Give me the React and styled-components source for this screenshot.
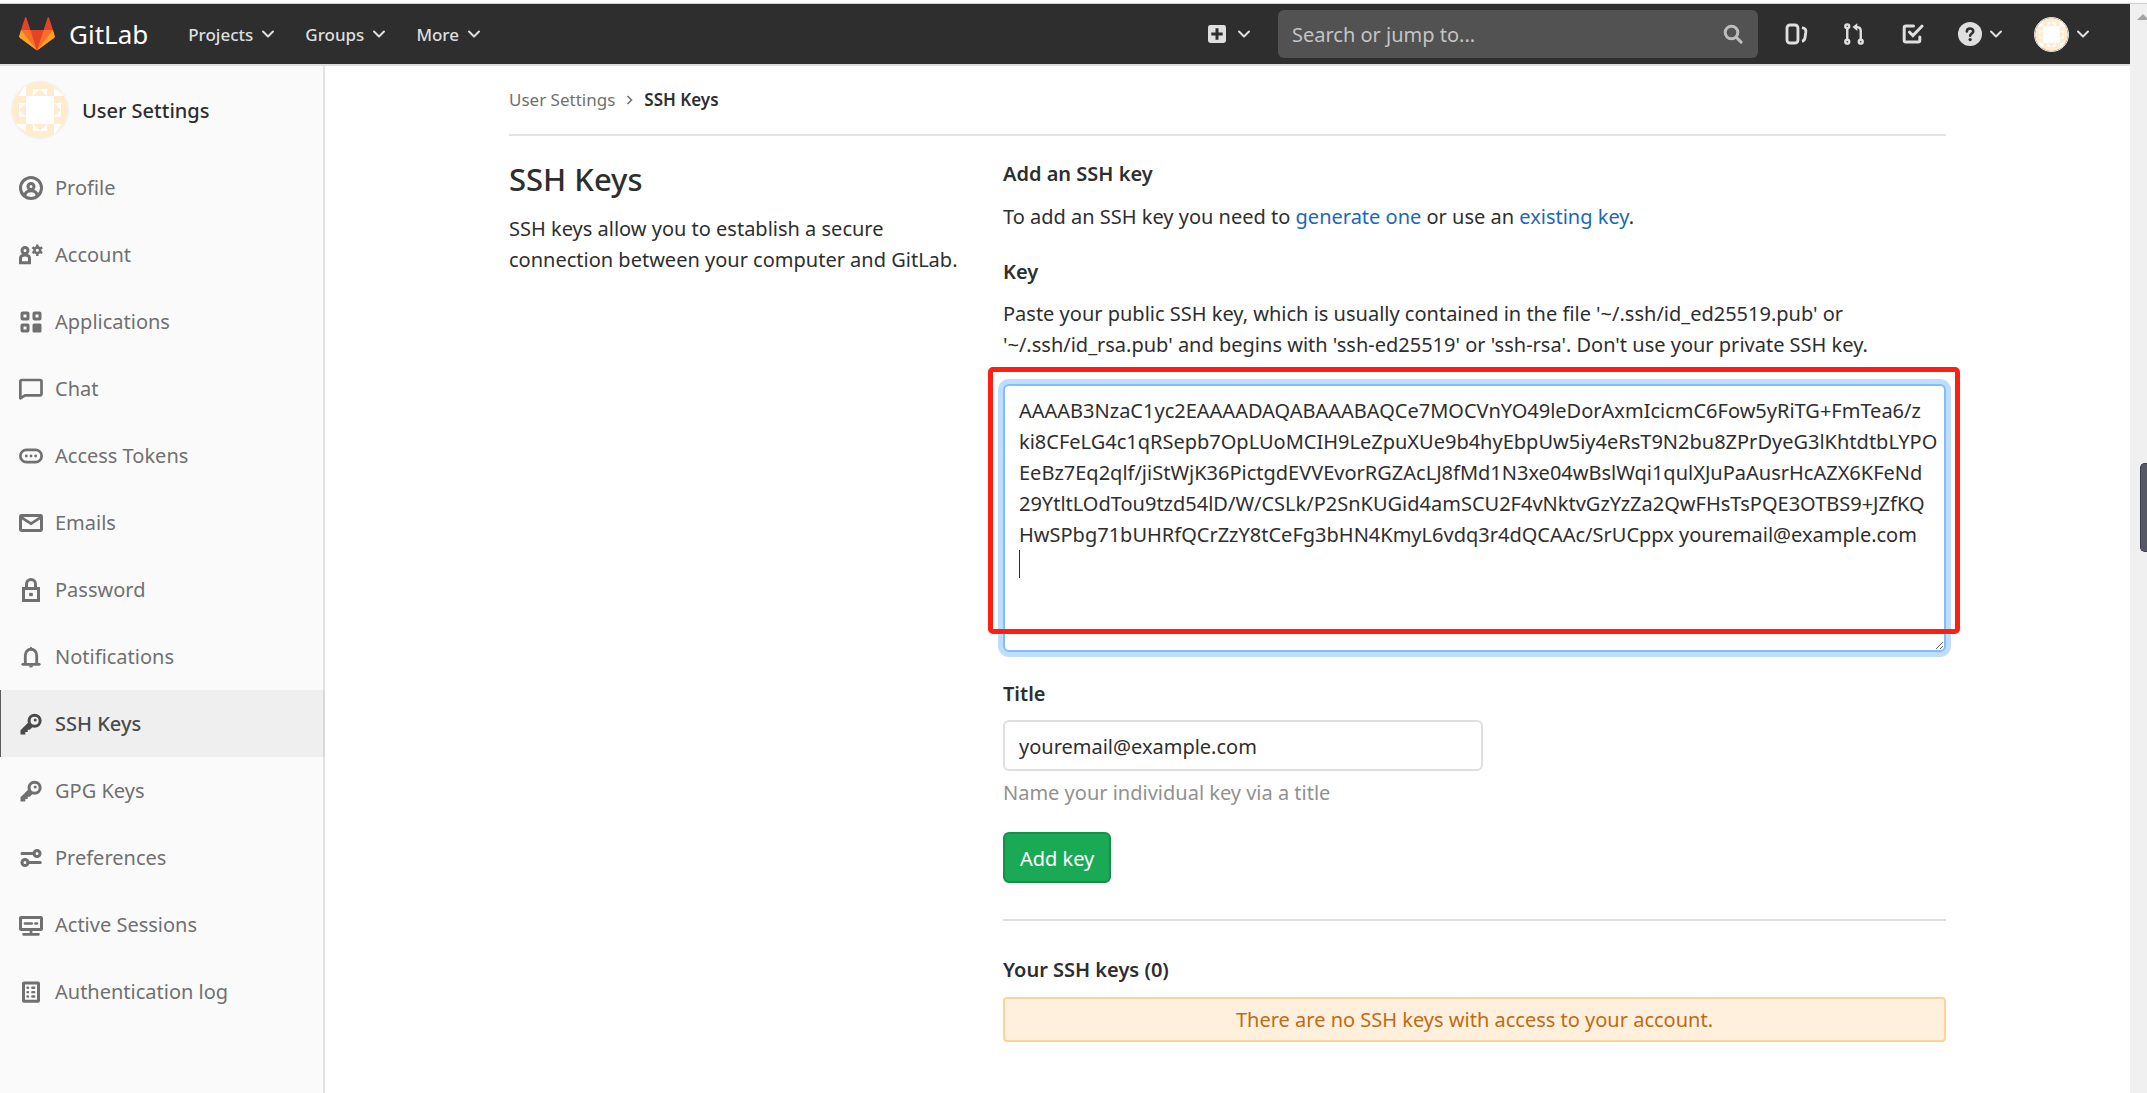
import React from "react";
import styled, { createGlobalStyle } from "styled-components";

const GlobalStyle = createGlobalStyle`
  *, *::before, *::after { box-sizing: border-box; }
  body {
    margin: 0;
    background: #fff;
    color: #2e2e2e;
    font-family: "Noto Sans", "Open Sans", sans-serif;
    font-size: 20px;
    line-height: 31px;
  }
  h1, h2, p, ul, ol { margin: 0; padding: 0; }
  ul, ol { list-style: none; }
  a { text-decoration: none; }
  input, textarea, button { font: inherit; color: inherit; }
`;

const Window = styled.div`
  display: flex;
  flex-direction: column;
  min-height: 100vh;
`;

const WindowEdge = styled.div`
  height: 4px;
  background: #fbfbfb;
  border-bottom: 1px solid #cfcfcf;
`;

const Viewport = styled.div`
  display: flex;
  flex: 1;
  position: relative;
`;

const Page = styled.div`
  display: flex;
  flex-direction: column;
  flex: 1;
  min-width: 0;
`;

const ScrollTrack = styled.div`
  flex: none;
  width: 17px;
  padding-top: 10px;
  overflow: hidden;
  background: #f0f0f0;
`;

const ScrollArrow = styled.div`
  width: 12px;
  height: 6px;
  margin-left: 7px;
  background: #a3a3a3;
  clip-path: polygon(50% 0, 100% 100%, 0 100%);
`;

const DockTab = styled.div`
  position: absolute;
  top: 459px;
  right: 0;
  width: 7px;
  height: 89px;
  border: 1px solid #3c3e4a;
  border-right: 0;
  border-radius: 5px 0 0 5px;
  background: #565866;
`;

const Navbar = styled.header`
  display: flex;
  align-items: center;
  justify-content: space-between;
  height: 62px;
  padding: 0 40px 0 19px;
  background: #2e2e2e;
  border-bottom: 2px solid #dfdfdf;
`;

const Brand = styled.a`
  display: flex;
  align-items: center;
  gap: 14px;
  margin-right: 40px;
  color: #fff;
  font-size: 26px;
`;

const NavGroup = styled.nav`
  display: flex;
  align-items: center;
`;

const NavMenu = styled.button`
  display: flex;
  align-items: center;
  gap: ${(p) => p.$gap || 8}px;
  margin: 0 ${(p) => p.$after || 0}px 0 0;
  padding: 0;
  border: 0;
  background: none;
  color: #dfdfdf;
  font-size: 17px;
  font-weight: 500;
`;

const NavLink = styled.a`
  display: flex;
  margin-right: 34px;
  color: #dfdfdf;
`;

const SearchBox = styled.label`
  display: flex;
  align-items: center;
  width: 480px;
  height: 48px;
  margin-right: 26px;
  padding: 0 13px 0 14px;
  border-radius: 6px;
  background: #525252;
  color: #bdbdbd;
`;

const SearchInput = styled.input`
  flex: 1;
  min-width: 0;
  padding: 0;
  border: 0;
  outline: 0;
  background: none;
  &::placeholder { color: #c4c4c4; opacity: 1; }
`;

const Body = styled.div`
  display: flex;
  flex: 1;
`;

const Sidebar = styled.aside`
  flex: none;
  width: 325px;
  background: #fafafa;
  box-shadow: inset -2px 0 0 #e3e3e3;
`;

const SidebarHead = styled.a`
  display: flex;
  align-items: center;
  gap: 13px;
  height: 88px;
  padding-left: 11px;
  color: #2e2e2e;
  font-weight: 500;
`;

const SideLink = styled.a`
  display: flex;
  align-items: center;
  gap: 12px;
  height: 67px;
  padding-left: 18px;
  border-left: 1px solid ${(p) => (p.$active ? "#5c5c5c" : "transparent")};
  background: ${(p) => (p.$active ? "rgba(0, 0, 0, 0.045)" : "none")};
  color: ${(p) => (p.$active ? "#4a4a4a" : "#707070")};
  font-weight: ${(p) => (p.$active ? 500 : 400)};
`;

const Main = styled.main`
  flex: 1;
  min-width: 0;
`;

const Container = styled.div`
  max-width: 1485px;
  margin: 0 auto;
  padding: 0 24px;
`;

const Breadcrumb = styled.ol`
  display: flex;
  align-items: center;
  gap: 11px;
  height: 70px;
  padding-bottom: 1px;
  border-bottom: 2px solid #e3e3e3;
  font-size: 17px;
`;

const Crumb = styled.a`
  color: ${(p) => (p.$current ? "#2e2e2e" : "#707070")};
  font-weight: ${(p) => (p.$current ? 600 : 400)};
`;

const CrumbItem = styled.li`
  display: flex;
  align-items: center;
  gap: 11px;
  color: #707070;
`;

const Columns = styled.div`
  display: grid;
  grid-template-columns: calc((100% - 90px) / 3) 1fr;
  column-gap: 45px;
  padding-top: 22px;
`;

const PageTitle = styled.h1`
  margin-bottom: 13px;
  font-size: 31px;
  line-height: 42px;
  font-weight: 500;
`;

const SectionTitle = styled.h2`
  margin-bottom: 12px;
  font-size: 20px;
  line-height: 31px;
  font-weight: 600;
`;

const Text = styled.p`
  margin-bottom: ${(p) => p.$after || 0}px;
`;

const TextLink = styled.a`
  color: #1b69b6;
`;

const FieldLabel = styled.label`
  display: block;
  margin-bottom: 11px;
  font-weight: 600;
`;

const KeyField = styled.div`
  position: relative;
  margin-bottom: 26px;
`;

const KeyInput = styled.textarea`
  display: block;
  width: 100%;
  height: 268px;
  padding: 9px 14px;
  border: 2px solid #80bdff;
  border-radius: 6px;
  outline: 0;
  box-shadow: 0 0 0 5px #bfdeff;
  background: #fff;
  line-height: 31px;
  white-space: pre;
  overflow: hidden;
  resize: vertical;
`;

const Caret = styled.span`
  position: absolute;
  top: 166px;
  left: 16px;
  width: 1px;
  height: 28px;
  background: #2e2e2e;
`;

const Highlight = styled.div`
  position: absolute;
  inset: -17px -14px 18px -15px;
  border: 5px solid #ff1f12;
  border-radius: 5px;
  pointer-events: none;
`;

const TitleInput = styled.input`
  display: block;
  width: 480px;
  max-width: 100%;
  height: 51px;
  padding: 2px 14px 0;
  border: 2px solid #dfdfdf;
  border-radius: 6px;
  background: #fff;
`;

const Hint = styled.p`
  margin: 6px 0 24px;
  color: #919191;
`;

const SubmitButton = styled.button`
  display: block;
  height: 51px;
  padding: 2px 15px 0;
  border: 2px solid #168f48;
  border-radius: 6px;
  background: #1aaa55;
  color: #fff;
`;

const Divider = styled.hr`
  height: 2px;
  margin: 36px 0 33px;
  border: 0;
  background: #dfdfdf;
`;

const EmptyNotice = styled.p`
  padding: 5px 14px;
  border: 2px solid #fdd496;
  border-radius: 4px;
  background: #fff0de;
  color: #c26a10;
  text-align: center;
`;

const IconSvg = styled.svg`
  display: block;
  flex: none;
  fill: none;
  stroke: currentColor;
  stroke-width: ${(p) => p.$stroke || 2};
`;

const Solid = { fill: "currentColor", stroke: "none" };

const keyShape = (
  <>
    <circle cx="10.4" cy="5.8" r="3.7" />
    <circle cx="10.8" cy="5.4" r="1" {...Solid} />
    <path d="M6 7.2 1 12.2V15h3.2v-1.6h1.6v-1.6h1.4L9.2 9.8z" {...Solid} />
  </>
);

const shapes = {
  profile: (
    <>
      <circle cx="8" cy="8" r="7" />
      <circle cx="8" cy="7" r="2" />
      <path d="M3.8 13.4C4 10.8 5.6 9.8 8 9.8s4 1 4.2 3.6" />
    </>
  ),
  account: (
    <>
      <circle cx="4" cy="5" r="2" />
      <path d="M1 13.2V10.5C1 8.8 2.2 8 4 8s3 .8 3 2.5v2.7z" />
      <circle cx="12.2" cy="4.8" r="1.9" strokeWidth="1.7" />
      <path d="M12.2 1v1.6M12.2 7v1.6M8.9 2.9l1.4.8M14.1 5.9l1.4.8M8.9 6.7l1.4-.8M14.1 3.7l1.4-.8" strokeWidth="1.6" />
    </>
  ),
  applications: (
    <>
      <rect x="2" y="2" width="4" height="4" rx=".4" />
      <rect x="10" y="2" width="4" height="4" rx=".4" />
      <rect x="2" y="10" width="4" height="4" rx=".4" />
      <rect x="9" y="9" width="6" height="6" rx="1" {...Solid} />
    </>
  ),
  chat: <path d="M.9 14.2V3c0-.6.4-1 1-1H14c.6 0 1 .4 1 1v8.200c0 .6-.4 1-1 1H4z" strokeWidth="1.8" strokeLinejoin="round" />,
  token: (
    <>
      <rect x=".9" y="3.900" width="14.200" height="8.200" rx="4.100" strokeWidth="1.8" />
      <circle cx="4.900" cy="8" r=".95" {...Solid} />
      <circle cx="8" cy="8" r=".95" {...Solid} />
      <circle cx="11.100" cy="8" r=".95" {...Solid} />
    </>
  ),
  mail: (
    <>
      <rect x="1" y="3" width="14" height="10" rx=".6" />
      <path d="m1.500 4.200 6.500 4.200 6.500-4.200" strokeWidth="1.8" />
    </>
  ),
  lock: (
    <>
      <rect x="3" y="7" width="10" height="8" />
      <path d="M5 6.500V4a3 3 0 0 1 6 0v2.500" />
      <rect x="6.800" y="9.900" width="2.400" height="2.200" {...Solid} />
    </>
  ),
  bell: (
    <>
      <path d="M4.200 12.500V7a3.800 4.200 0 0 1 7.600 0v5.500" strokeWidth="1.9" />
      <path d="M2.500 12.900h11" strokeLinecap="round" strokeWidth="1.8" />
      <path d="M6.600 2.600 8 1l1.400 1.600zM6.500 13.600h3L8.800 15H7.200z" {...Solid} />
    </>
  ),
  key: keyShape,
  preferences: (
    <>
      <path d="M2 5h8M6 11h8.200" strokeLinecap="round" />
      <circle cx="12" cy="5" r="2" />
      <circle cx="4" cy="11" r="2" />
    </>
  ),
  monitor: (
    <>
      <rect x="1" y="3" width="14" height="8" rx=".4" />
      <path d="M4 7h4.500M11 7h1" strokeLinecap="round" strokeWidth="1.8" />
      <path d="M8 11.500V14M3 14.200h10" strokeLinecap="round" strokeWidth="1.8" />
    </>
  ),
  log: (
    <>
      <rect x="3" y="2" width="10" height="12.200" rx=".3" />
      <path d="M5.700 5.200h.3M8.900 5.200h1.200M5.700 8.100h.3M8.900 8.100h1.200M5.700 11h.3M8.900 11h1.200" strokeLinecap="round" strokeWidth="1.6" />
    </>
  ),
  plus: (
    <>
      <rect x="2" y="2" width="12" height="12" rx="1.600" {...Solid} />
      <path d="M8 4.200v7.600M4.200 8h7.600" stroke="#2e2e2e" />
    </>
  ),
  search: (
    <>
      <circle cx="7" cy="7" r="4.200" />
      <path d="m10.300 10.300 3.100 3.100" strokeLinecap="round" />
    </>
  ),
  issues: (
    <>
      <rect x="2" y="2" width="7.300" height="12" rx="2" strokeWidth="1.900" />
      <path d="M12 3.800c2.700.6 2.700 1.400 2.500 3.200l-.5 3.500c-.2 1.500-.6 2-2 2.400" strokeWidth="1.900" />
    </>
  ),
  merge: (
    <>
      <circle cx="3.500" cy="2.900" r="1.300" />
      <circle cx="3.500" cy="13.100" r="1.300" />
      <circle cx="12.500" cy="13.100" r="1.300" />
      <path d="M3.500 4.500v7M12.500 11.500V6c0-1.800-.8-2.600-2.600-2.600H9" />
      <path d="M10.200.8v5.200L7 3.400z" {...Solid} />
    </>
  ),
  todo: (
    <>
      <path d="M9 2.600H4c-.8 0-1.200.4-1.200 1.200v8.400c0 .8.4 1.200 1.200 1.200h8c.8 0 1.200-.4 1.200-1.200V10" strokeLinecap="round" />
      <path d="m6.400 6.800 2.200 2.300 6-6.300" strokeLinecap="round" />
    </>
  ),
  help: (
    <>
      <circle cx="8" cy="8" r="8" {...Solid} />
      <path d="M5.900 6.300c0-1.300.9-2 2.100-2s2.200.8 2.200 1.900c0 1.400-2.100 1.500-2.100 3" stroke="#2e2e2e" strokeWidth="1.700" strokeLinecap="round" />
      <circle cx="8.100" cy="11.700" r="1.100" fill="#2e2e2e" stroke="none" />
    </>
  ),
};

function Icon({ name, size = 24, stroke }) {
  return (
    <IconSvg width={size} height={size} viewBox="0 0 16 16" $stroke={stroke} aria-hidden="true">
      {shapes[name]}
    </IconSvg>
  );
}

function ChevronDown() {
  return (
    <IconSvg width="14" height="10" viewBox="0 0 14 10" aria-hidden="true">
      <path d="m2 2.500 5 5 5-5" strokeLinecap="round" strokeLinejoin="round" />
    </IconSvg>
  );
}

function ChevronRight() {
  return (
    <IconSvg width="7" height="10" viewBox="0 0 7 10" $stroke={1.6} aria-hidden="true">
      <path d="m1.500 1 4 4-4 4" />
    </IconSvg>
  );
}

function Logo() {
  return (
    <svg width="36" height="36" viewBox="0 0 36 36" aria-hidden="true">
      <path fill="#e24329" d="M2 14l9.380 9v-9l-4-12.280c-.205-.632-1.176-.632-1.380 0z" />
      <path fill="#e24329" d="M34 14l-9.380 9v-9l4-12.280c.205-.632 1.176-.632 1.380 0z" />
      <path fill="#e24329" d="M18 34.380 3 14h30z" />
      <path fill="#fc6d26" d="M18 34.380 11.380 14H2l4 11z" />
      <path fill="#fc6d26" d="M18 34.380 24.620 14H34l-4 11z" />
      <path fill="#fca326" d="M2 14 .1 20.160c-.18.565 0 1.200.5 1.560L18 34.380z" />
      <path fill="#fca326" d="m34 14 1.900 6.160c.18.565 0 1.200-.5 1.560L18 34.380z" />
    </svg>
  );
}

const AvatarSvg = styled.svg`
  display: block;
  flex: none;
  border-radius: 50%;
  border: 1px solid #f0f0f0;
`;

function Avatar({ size }) {
  return (
    <AvatarSvg width={size} height={size} viewBox="0 0 8 8" role="img" aria-label="User avatar">
      <rect width="8" height="8" fill="#ffeccf" />
      <rect x="2" y="2" width="4" height="4" fill="#fff" />
      {[0, 90, 180, 270].map((turn) => (
        <g key={turn} transform={`rotate(${turn} 4 4)`} fill="#fff">
          <path d="M3 1h2v1L4 1 3 2z" />
          <path d="M5 2V1L4 1z" />
          <path d="M2 .4V2H.9zM.4 2 2 .4H0V2z" />
        </g>
      ))}
    </AvatarSvg>
  );
}

const sideItems = [
  ["Profile", "profile"],
  ["Account", "account"],
  ["Applications", "applications"],
  ["Chat", "chat"],
  ["Access Tokens", "token"],
  ["Emails", "mail"],
  ["Password", "lock"],
  ["Notifications", "bell"],
  ["SSH Keys", "key"],
  ["GPG Keys", "key"],
  ["Preferences", "preferences"],
  ["Active Sessions", "monitor"],
  ["Authentication log", "log"],
];

const publicKey = [
  "AAAAB3NzaC1yc2EAAAADAQABAAABAQCe7MOCVnYO49leDorAxmIcicmC6Fow5yRiTG+FmTea6/z",
  "ki8CFeLG4c1qRSepb7OpLUoMCIH9LeZpuXUe9b4hyEbpUw5iy4eRsT9N2bu8ZPrDyeG3lKhtdtbLYPO",
  "EeBz7Eq2qlf/jiStWjK36PictgdEVVEvorRGZAcLJ8fMd1N3xe04wBslWqi1qulXJuPaAusrHcAZX6KFeNd",
  "29YtltLOdTou9tzd54lD/W/CSLk/P2SnKUGid4amSCU2F4vNktvGzYzZa2QwFHsTsPQE3OTBS9+JZfKQ",
  "HwSPbg71bUHRfQCrZzY8tCeFg3bHN4KmyL6vdq3r4dQCAAc/SrUCppx youremail@example.com",
  "",
].join("\n");

function TopBar() {
  return (
    <Navbar>
      <NavGroup aria-label="Main">
        <Brand href="#home">
          <Logo />
          GitLab
        </Brand>
        <NavMenu $after={30}>Projects <ChevronDown /></NavMenu>
        <NavMenu $after={30}>Groups <ChevronDown /></NavMenu>
        <NavMenu>More <ChevronDown /></NavMenu>
      </NavGroup>
      <NavGroup aria-label="Tools">
        <NavMenu $after={27} aria-label="New">
          <Icon name="plus" />
          <ChevronDown />
        </NavMenu>
        <SearchBox>
          <SearchInput type="text" aria-label="Search" placeholder="Search or jump to..." />
          <Icon name="search" />
        </SearchBox>
        <NavLink href="#issues" aria-label="Issues"><Icon name="issues" stroke={2} /></NavLink>
        <NavLink href="#merge-requests" aria-label="Merge requests"><Icon name="merge" stroke={1.6} /></NavLink>
        <NavLink href="#todos" aria-label="To-do list"><Icon name="todo" /></NavLink>
        <NavMenu $gap={7} $after={31} aria-label="Help">
          <Icon name="help" />
          <ChevronDown />
        </NavMenu>
        <NavMenu $gap={7} aria-label="Account menu">
          <Avatar size={35} />
          <ChevronDown />
        </NavMenu>
      </NavGroup>
    </Navbar>
  );
}

function SideNav() {
  return (
    <Sidebar>
      <SidebarHead href="#settings">
        <Avatar size={58} />
        User Settings
      </SidebarHead>
      <ul>
        {sideItems.map(([label, icon]) => (
          <li key={label}>
            <SideLink href="#section" $active={label === "SSH Keys"}>
              <Icon name={icon} />
              {label}
            </SideLink>
          </li>
        ))}
      </ul>
    </Sidebar>
  );
}

function KeyForm() {
  return (
    <form onSubmit={(e) => e.preventDefault()}>
      <FieldLabel htmlFor="key">Key</FieldLabel>
      <Text $after={24}>
        Paste your public SSH key, which is usually contained in the file '~/.ssh/id_ed25519.pub' or
        <br />
        '~/.ssh/id_rsa.pub' and begins with 'ssh-ed25519' or 'ssh-rsa'. Don't use your private SSH key.
      </Text>
      <KeyField>
        <KeyInput id="key" defaultValue={publicKey} spellCheck={false} />
        <Caret aria-hidden="true" />
        <Highlight />
      </KeyField>
      <FieldLabel htmlFor="title">Title</FieldLabel>
      <TitleInput id="title" type="text" defaultValue="youremail@example.com" />
      <Hint>Name your individual key via a title</Hint>
      <SubmitButton type="submit">Add key</SubmitButton>
    </form>
  );
}

export default function App() {
  return (
    <Window>
      <GlobalStyle />
      <WindowEdge />
      <Viewport>
        <Page>
          <TopBar />
          <Body>
            <SideNav />
            <Main>
              <Container>
                <Breadcrumb>
                  <CrumbItem>
                    <Crumb href="#settings">User Settings</Crumb>
                    <ChevronRight />
                  </CrumbItem>
                  <CrumbItem>
                    <Crumb href="#keys" $current>SSH Keys</Crumb>
                  </CrumbItem>
                </Breadcrumb>
                <Columns>
                  <section>
                    <PageTitle>SSH Keys</PageTitle>
                    <Text>
                      SSH keys allow you to establish a secure
                      <br />
                      connection between your computer and GitLab.
                    </Text>
                  </section>
                  <section>
                    <SectionTitle>Add an SSH key</SectionTitle>
                    <Text $after={24}>
                      To add an SSH key you need to <TextLink href="#generate">generate one</TextLink> or use an{" "}
                      <TextLink href="#existing">existing key</TextLink>.
                    </Text>
                    <KeyForm />
                    <Divider />
                    <SectionTitle>Your SSH keys (0)</SectionTitle>
                    <EmptyNotice>There are no SSH keys with access to your account.</EmptyNotice>
                  </section>
                </Columns>
              </Container>
            </Main>
          </Body>
        </Page>
        <ScrollTrack>
          <ScrollArrow />
        </ScrollTrack>
        <DockTab />
      </Viewport>
    </Window>
  );
}
